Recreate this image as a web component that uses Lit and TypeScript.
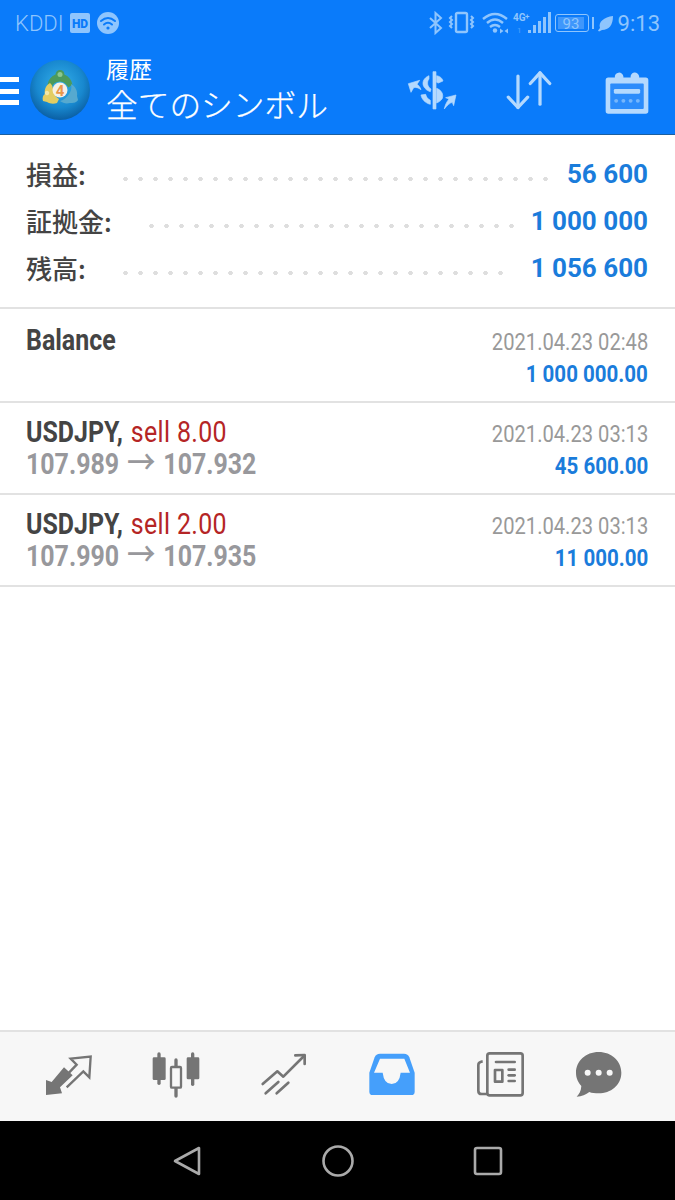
import { LitElement, html, css, svg } from "lit";
import { customElement } from "lit/decorators.js";

const summary = [
  { label: "損益:", value: "56 600", gap: 15 },
  { label: "証拠金:", value: "1 000 000", gap: 13 },
  { label: "残高:", value: "1 056 600", gap: 24 },
];

const trades = [
  { cls: "first", title: "Balance", side: "", from: "", to: "", date: "2021.04.23 02:48", amount: "1 000 000.00" },
  { cls: "", title: "USDJPY,", side: "sell 8.00", from: "107.989", to: "107.932", date: "2021.04.23 03:13", amount: "45 600.00" },
  { cls: "", title: "USDJPY,", side: "sell 2.00", from: "107.990", to: "107.935", date: "2021.04.23 03:13", amount: "11 000.00" },
];

const G = "#757575";

const navIcons = [
  { x: 129, v: svg`<path fill="${G}" d="M138 150 L155 156 L192 112 L218 136 L180 172 L186 190 L138 195Z"/><path fill="none" stroke="${G}" stroke-width="7" d="M200 172 L250 124 L268 142 L272 80 L212 86 L230 104 L190 146"/>` },
  { x: 453, v: svg`<g fill="${G}"><rect x="458" y="82" width="39" height="68" rx="4"/><rect x="472" y="67" width="10" height="98" rx="5"/><rect x="560" y="82" width="38" height="66" rx="4"/><rect x="573" y="67" width="10" height="101" rx="5"/><rect x="523" y="85" width="10" height="118" rx="5"/></g><rect x="513" y="111" width="30" height="62" rx="3" fill="#f7f7f7" stroke="${G}" stroke-width="7"/>` },
  { x: 777, v: svg`<g fill="none" stroke="${G}" stroke-width="8" stroke-linecap="round" stroke-linejoin="round"><path d="M788 162 L832 124 L850 140 L912 78"/><path d="M886 76 L914 75 L914 102"/><path d="M797 190 L835 156"/><path d="M830 190 L865 158"/></g>` },
  { x: 81, v: svg`<path fill="#459ffb" d="M120 71 H192 Q204 71 208 82 L224 128 V185 Q224 195 214 195 H98 Q88 195 88 185 V128 L104 82 Q108 71 120 71Z"/><path fill="#f7f7f7" d="M120 86 H193 L210 128 H182 Q178 162 155 162 Q132 162 128 128 H102Z"/>` },
  { x: 405, v: svg`<g fill="none" stroke="${G}" stroke-width="8" stroke-linejoin="round"><rect x="442" y="70" width="106" height="126" rx="7"/><path d="M442 192 H425 Q415 192 415 182 V105 Q415 96 428 94"/><rect x="465" y="120" width="22" height="35"/></g><g stroke="${G}" stroke-width="8" stroke-linecap="round"><path d="M468 96 H524"/><path d="M506 119 H524"/><path d="M506 136 H524"/><path d="M506 153 H524"/></g>` },
  { x: 702, v: svg`<path fill="${G}" d="M776 66 C815 66 844 93 844 128 C844 165 812 190 776 190 C766 190 755 189 748 186 C738 194 725 200 710 200 C718 192 723 183 724 168 C716 158 708 146 708 128 C708 93 737 66 776 66Z"/><g fill="#f7f7f7"><circle cx="743" cy="128" r="9"/><circle cx="776" cy="128" r="9"/><circle cx="809" cy="128" r="9"/></g>` },
];

@customElement("app-root")
export class AppRoot extends LitElement {
  static styles = css`
    :host { display: block; width: 675px; height: 1200px; background: #fff; overflow: hidden; font-family: Roboto, "Noto Sans CJK JP", sans-serif; }
    .page { display: flex; flex-direction: column; height: 1200px; }
    .top { background: #0a7bfa; height: 135px; box-sizing: border-box; border-bottom: 1px solid #1b5f9f; flex: none; }
    .status { height: 46px; display: flex; align-items: center; color: #8fc5fd; padding: 0 15px 0 15px; }
    .carrier { font-size: 22px; font-weight: 300; }
    .hd { margin-left: 6px; }
    .wifi { margin-left: 7px; }
    .spacer { flex: 1; }
    .clock { font-size: 22px; margin-left: 4px; }
    .sico { display: block; flex: none; }
    .bat { margin-left: 1px; }
    .leaf { margin-left: 2px; }
    .appbar { display: flex; align-items: center; height: 88px; }
    .burger { width: 19px; height: 28px; display: flex; flex-direction: column; justify-content: space-between; margin-top: 2px; }
    .burger i { display: block; height: 5px; background: #fff; }
    .logo { margin-left: 11px; flex: none; display: block; }
    .titles { margin-left: 16px; margin-top: -3px; color: #fff; font-family: "Noto Sans CJK JP", sans-serif; display: flex; flex-direction: column; }
    .t1 { font-size: 23px; line-height: 29px; }
    .t2 { font-size: 31.7px; line-height: 41px; font-weight: 300; -webkit-text-stroke: 0.25px #fff; }
    .actions { margin-left: auto; display: flex; align-items: center; padding-right: 26px; }
    .a1 { margin-right: 47px; margin-top: 1px; }
    .a2 { margin-right: 53px; margin-top: 0; }
    .a3 { margin-top: 3px; }
    .summary { padding: 15px 27px 16px 26px; height: 174px; box-sizing: border-box; border-bottom: 2px solid #e2e2e2; flex: none; }
    .srow { display: flex; align-items: center; height: 47px; }
    .label { font-family: "Noto Sans CJK JP", sans-serif; font-size: 26px; font-weight: 500; color: #444; line-height: 47px; }
    .dots { flex: 1; height: 4px; margin: 10px 0 0 32px; background-image: radial-gradient(circle, #dedede 2px, transparent 2.5px); background-size: 15px 4px; background-repeat: repeat-x; }
    .value { font-size: 26px; font-weight: 700; color: #1a7cdb; }
    .trow { display: flex; justify-content: space-between; height: 92px; box-sizing: border-box; border-bottom: 2px solid #e2e2e2; padding: 0 27px 0 26px; flex: none; }
    .trow.first { height: 94px; }
    .left, .right { display: flex; flex-direction: column; }
    .right { align-items: flex-end; padding-top: 15px; }
    .first .right { padding-top: 17px; }
    .left { padding-top: 13px; }
    .first .left { padding-top: 15px; }
    .line { font-size: 29px; line-height: 32px; white-space: nowrap; display: inline-block; transform: scaleX(0.86); transform-origin: left center; }
    .name { font-weight: 700; color: #444; }
    .side { color: #b52525; margin-left: 2px; letter-spacing: 0.4px; }
    .prices { font-weight: 700; color: #98989c; }
    .arrow { font-family: "Noto Sans CJK JP", sans-serif; font-weight: 500; font-size: 33px; line-height: 0; margin: 0 2px; }
    .date { font-size: 24px; line-height: 32px; color: #999; white-space: nowrap; transform: scaleX(0.84); transform-origin: right center; }
    .amount { font-size: 24px; line-height: 32px; font-weight: 700; color: #1a7cdb; white-space: nowrap; transform: scaleX(0.855); transform-origin: right center; }
    .fill { flex: 1; }
    .nav { height: 91px; box-sizing: border-box; background: #f7f7f7; border-top: 2px solid #e2e2e2; display: flex; align-items: flex-start; padding-left: 14px; flex: none; }
    .nitem { width: 108px; display: flex; justify-content: center; padding-top: 18px; box-sizing: border-box; flex: none; }
    .nitem:last-child { margin-left: -9px; }
    .nitem svg { width: 50px; height: 48px; display: block; }
    .sys { height: 79px; background: #000; display: flex; align-items: center; flex: none; padding-left: 172px; }
    .b1 { margin-right: 120px; } .b2 { margin-right: 119px; }
    .sys svg { display: block; }
  `;

  render() {
    const S = "#8fc5fd";
    const A = "#b4d9fe";
    return html`<div class="page">
      <div class="top">
        <div class="status">
          <span class="carrier">KDDI</span>
          <svg class="sico hd" width="20" height="20" viewBox="0 0 20 20"><rect width="20" height="20" rx="2" fill="${S}"/><text x="10" y="14.5" text-anchor="middle" font-size="12" font-weight="900" font-family="Roboto" fill="#0a7bfa">HD</text></svg>
          <svg class="sico wifi" width="22" height="22" viewBox="0 0 22 22"><circle cx="11" cy="11" r="11" fill="${S}"/><g fill="none" stroke="#0a7bfa" stroke-width="2" stroke-linecap="round"><path d="M4 9 Q11 3 18 9"/><path d="M7 12.5 Q11 9 15 12.5"/></g><circle cx="11" cy="16" r="1.6" fill="#0a7bfa"/></svg>
          <span class="spacer"></span>
          <svg class="sico" width="125" height="24" viewBox="0 0 125 24">
            <g fill="none" stroke="${S}" stroke-width="2"><path d="M1 7 L12 17 L6.5 22 V2 L12 7 L1 17"/>
              <rect x="27" y="2" width="11" height="19" rx="1.5" stroke-width="2.4"/>
              <path d="M23 5 l-2 2 l2 2 l-2 2 l2 2 l-2 2 l2 2"/><path d="M42 5 l2 2 l-2 2 l2 2 l-2 2 l2 2 l-2 2"/>
              <path d="M54 8 Q66 -2 78 8" stroke-width="2.4"/><path d="M58 12 Q66 5 74 12" stroke-width="2.4"/><path d="M61 16 Q66 12 71 16" stroke-width="2.4"/></g>
            <circle cx="66" cy="19.5" r="2.2" fill="${S}"/><path d="M71 17.5 l3.5 2.5 l-3.5 2.5z M79 17.5 l-3.5 2.5 l3.5 2.5z" fill="${S}"/>
            <text x="84" y="10" font-size="10" font-weight="700" font-family="Roboto" fill="${S}">4G</text><text x="96" y="8" font-size="8" font-weight="700" font-family="Roboto" fill="${S}">+</text>
            <text x="88" y="22" font-size="8" font-family="Roboto" fill="${S}" opacity=".5">1</text>
            <g fill="${S}"><rect x="99" y="19" width="3" height="3"/><rect x="104" y="14" width="3" height="8"/><rect x="109" y="10" width="3" height="12"/><rect x="114" y="6" width="3" height="16"/><rect x="119" y="1" width="3" height="21"/></g>
          </svg>
          <svg class="sico bat" width="36" height="20" viewBox="0 0 36 20"><rect x=".5" y="1.5" width="33" height="17" rx="2.5" fill="none" stroke="${S}"/><rect x="3" y="4" width="26" height="12" fill="#3f97fb"/><text x="16" y="15.5" text-anchor="middle" font-size="15" font-family="Roboto" fill="${S}">93</text></svg>
          <svg class="sico" width="4" height="12" viewBox="0 0 4 12"><rect x="1" width="2" height="12" fill="${S}"/></svg>
          <svg class="sico leaf" width="17" height="17" viewBox="0 0 17 17"><path fill="${S}" d="M16 1 C16 10 12 15 5 15 L2 16.5 L1 15.5 L3 13 C1 7 7 2 16 1Z"/></svg>
          <span class="clock">9:13</span>
        </div>
        <div class="appbar">
          <div class="burger"><i></i><i></i><i></i></div>
          <svg class="logo" width="60" height="60" viewBox="0 0 60 60">
            <defs><radialGradient id="lg" cx="50%" cy="40%" r="60%"><stop offset="0" stop-color="#35b0ea"/><stop offset=".65" stop-color="#1888cf"/><stop offset="1" stop-color="#0b5fa3"/></radialGradient></defs>
            <circle cx="30" cy="30" r="30" fill="url(#lg)"/>
            <path fill="#4c9a5c" d="M30 10 a4.5 4.5 0 0 1 4.4 4.4 c4 1.6 7 5 8 10 l-4 3 c-2-4-5-6-8.4-6 c-4 0-7 2-8.5 6 l-4-3 c1-5 3.9-8.4 8-10 a4.5 4.5 0 0 1 4.5-4.4z"/>
            <path fill="#8cc78e" d="M30 12 a2.5 2.5 0 0 1 0 5 a2.5 2.5 0 0 1 0-5z"/>
            <path fill="#e3cd62" d="M20 23 c3 2 3 7 4 10 c1 3 3 5 5 6 l-2 4 c-3 1-7 1-10-1 l-4-1 c-1-3 0-6 2-7 c-1-4 1-9 5-11z"/>
            <path fill="#f2e7a6" d="M15 32 a2 2 0 0 1 4 2 a2 2 0 0 1-4-2z"/>
            <path fill="#56a9cf" d="M41 24 c4 2 7 7 6 12 l1 4 c-2 3-5 3-8 3 c-4 1-7 0-10-2 c4-1 7-4 9-7 c2-3 3-6 2-10z"/>
            <circle cx="30" cy="30" r="7.5" fill="#f6f0e6"/>
            <text x="30" y="35.5" text-anchor="middle" font-size="15" font-weight="700" font-family="Roboto" fill="#e9984a">4</text>
          </svg>
          <div class="titles"><span class="t1">履歴</span><span class="t2">全てのシンボル</span></div>
          <div class="actions">
            <svg class="a1" width="53.3" height="42" viewBox="15 25 160 126">
              <g fill="${A}" stroke="${A}" stroke-width="2" stroke-linejoin="round">
                <rect x="96" y="30" width="9" height="112"/>
                <path d="M107 42 C118 44 124 50 126 58 L112 64 L107 62Z"/>
                <path d="M107 80 C122 86 128 98 124 110 C120 118 112 122 107 124Z"/>
                <path d="M84 42 C70 48 62 60 68 74 C72 82 80 88 88 90 L90 82 C80 76 76 62 84 52Z"/>
                <path d="M60 100 C62 112 72 124 88 128 L88 116 C80 112 76 106 74 98Z"/>
                <path d="M22 66 L56 56 L48 68 C54 72 58 78 60 84 C52 78 44 76 38 78 L30 92Z"/>
                <path d="M165 100 L134 108 L144 112 C136 122 132 132 130 142 C138 132 146 124 154 122 L158 132Z"/>
              </g>
            </svg>
            <svg class="a2" width="46" height="42" viewBox="315 205 142 126" fill="none" stroke="${A}" stroke-width="10" stroke-linecap="round" stroke-linejoin="round">
              <path d="M352 225 V322"/><path d="M322 290 L352 322 L382 290"/><path d="M420 312 V215"/><path d="M390 248 L420 215 L450 248"/>
            </svg>
            <svg class="a3" width="44" height="46" viewBox="612 200 134 136">
              <path fill="${A}" d="M622 224 H642 A11 11 0 1 1 668 220 V224 H690 A11 11 0 1 1 716 220 V224 H736 Q744 224 744 232 V326 Q744 334 736 334 H622 Q614 334 614 326 V232 Q614 224 622 224Z"/>
              <rect x="628" y="242" width="102" height="78" rx="3" fill="#2c8cfb"/>
              <rect x="639" y="259" width="80" height="14" rx="4" fill="${A}"/>
              <g fill="#76b6fc"><circle cx="646" cy="295" r="6"/><circle cx="668" cy="295" r="6"/><circle cx="690" cy="295" r="6"/><circle cx="712" cy="295" r="6"/></g>
            </svg>
          </div>
        </div>
      </div>

      <div class="summary">
        ${summary.map((r) => html`<div class="srow"><span class="label">${r.label}</span><span class="dots" style="margin-right:${r.gap}px"></span><span class="value">${r.value}</span></div>`)}
      </div>

      ${trades.map((t) => html`<div class="trow ${t.cls}">
        <div class="left">
          <span class="line"><span class="name">${t.title}</span>${t.side ? html` <span class="side">${t.side}</span>` : ""}</span>
          ${t.from ? html`<span class="line prices">${t.from} <span class="arrow">→</span> ${t.to}</span>` : ""}
        </div>
        <div class="right"><span class="date">${t.date}</span><span class="amount">${t.amount}</span></div>
      </div>`)}

      <div class="fill"></div>

      <div class="nav">
        ${navIcons.map((n) => html`<div class="nitem"><svg viewBox="${n.x} 60 150 144">${n.v}</svg></div>`)}
      </div>
      <div class="sys">
        <svg class="b1" width="30" height="32" viewBox="0 0 30 32" fill="none" stroke="#aaa" stroke-width="2.6" stroke-linejoin="round"><path d="M27 3 V29 L3 16Z"/></svg>
        <svg class="b2" width="32" height="32" viewBox="0 0 32 32" fill="none" stroke="#aaa" stroke-width="2.6"><circle cx="16" cy="16" r="14.5"/></svg>
        <svg width="30" height="30" viewBox="0 0 30 30" fill="none" stroke="#aaa" stroke-width="2.6"><rect x="2" y="2" width="26" height="26" rx="2"/></svg>
      </div>
    </div>`;
  }
}
